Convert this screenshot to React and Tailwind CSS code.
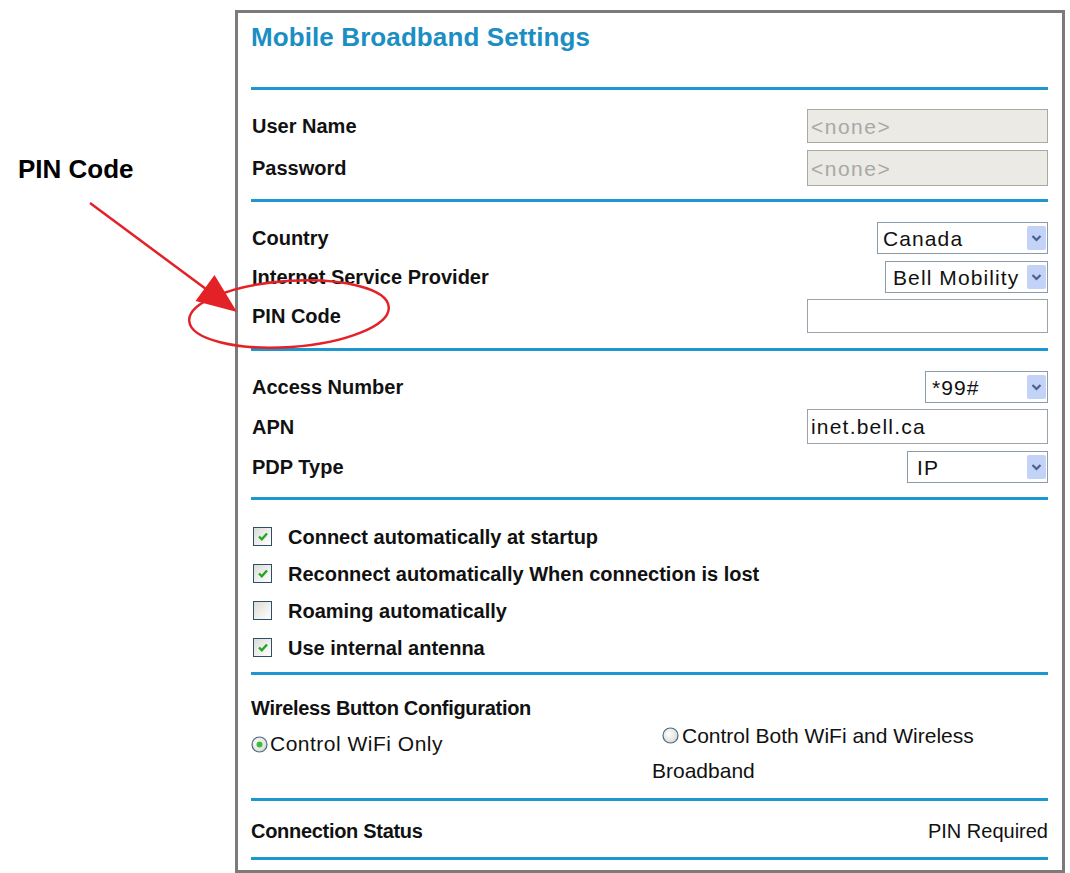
import React from "react"

const Rule = () => <div className="h-[3px] bg-[#1d97cf]" />

function Row({ label, h, children, className = "" }) {
    return (
        <div className={`flex items-center justify-between ${h} ${className}`}>
            <span className="pl-px text-[20px] font-bold leading-[24px] text-[#111]">{label}</span>
            {children}
        </div>
    )
}

function TextBox({ value, disabled, h }) {
    return (
        <div
            className={`flex w-[241px] items-center border px-[3px] text-[21px] leading-none ${h} ${
                disabled
                    ? "border-[#aaa9a0] bg-[#ebeae4] tracking-[1.5px] text-[#a8a8a8]"
                    : "border-[#9aa3ab] bg-white tracking-[1.2px] text-[#111]"
            }`}
        >
            {value}
        </div>
    )
}

function SelectBox({ value, w, pl }) {
    return (
        <div className={`flex h-[32px] items-center justify-between border border-[#8c9bab] bg-white ${w}`}>
            <span className={`text-[21px] leading-none tracking-[1.1px] text-[#111] ${pl}`}>{value}</span>
            <span className="mr-px flex h-[24px] w-[19px] items-center justify-center rounded-[2px] bg-[#c3d3f8]">
                <svg width="11" height="8" viewBox="0 0 11 8">
                    <path d="M1.5 2 L5.5 6 L9.5 2" fill="none" stroke="#4a5f8c" strokeWidth="2.2" />
                </svg>
            </span>
        </div>
    )
}

function CheckRow({ checked, children }) {
    return (
        <div className="flex h-[37px] items-center">
            <span className="ml-[2px] flex h-[19px] w-[19px] items-center justify-center border border-[#2c4f6c] bg-gradient-to-br from-[#dcdcd6] to-white">
                {checked && (
                    <svg width="12" height="11" viewBox="0 0 12 11">
                        <path d="M2 5.5 L4.8 8.3 L10 2.5" fill="none" stroke="#24a624" strokeWidth="2.4" />
                    </svg>
                )}
            </span>
            <span className="ml-[16px] text-[20px] font-bold leading-[24px] text-[#111]">{children}</span>
        </div>
    )
}

function Radio({ checked }) {
    return (
        <svg width="17" height="17" viewBox="0 0 17 17" className="inline-block shrink-0">
            <defs>
                <radialGradient id={checked ? "rbg1" : "rbg2"} cx="0.4" cy="0.4" r="0.7">
                    <stop offset="0" stopColor="#ffffff" />
                    <stop offset="1" stopColor="#d6d6cf" />
                </radialGradient>
            </defs>
            <circle cx="8.5" cy="8.5" r="7.5" fill={`url(#${checked ? "rbg1" : "rbg2"})`} stroke="#4d6a84" strokeWidth="1.2" />
            {checked && <circle cx="8.5" cy="8.5" r="3" fill="#3dbb3d" />}
        </svg>
    )
}

export default function App() {
    return (
        <div className="relative flex h-[873px] w-[1070px] overflow-hidden bg-white font-['Liberation_Sans',Arial,sans-serif]">
            <div className="w-[235px] shrink-0 pl-[18px] pt-[154px]">
                <div className="text-[26px] font-bold leading-[30px] text-black">PIN Code</div>
            </div>

            <div className="mt-[10px] h-[863px] w-[830px] shrink-0 border-[3px] border-[#7b7b7b] pl-[13px] pr-[14px]">
                <div className="h-[74px] pt-[9px]">
                    <h1 className="text-[26px] font-bold leading-[30px] tracking-[0.1px] text-[#1b8ec3]">Mobile Broadband Settings</h1>
                </div>
                <Rule />

                <div className="pb-[13px] pt-[19px]">
                    <Row label="User Name" h="h-[34px]">
                        <TextBox value="<none>" disabled h="h-[34px]" />
                    </Row>
                    <Row label="Password" h="h-[36px]" className="mt-[7px]">
                        <TextBox value="<none>" disabled h="h-[36px]" />
                    </Row>
                </div>
                <Rule />

                <div className="pb-[15px] pt-[20px]">
                    <Row label="Country" h="h-[32px]">
                        <SelectBox value="Canada" w="w-[171px]" pl="pl-[5px]" />
                    </Row>
                    <Row label="Internet Service Provider" h="h-[32px]" className="mt-[7px]">
                        <SelectBox value="Bell Mobility" w="w-[163px]" pl="pl-[7px]" />
                    </Row>
                    <Row label="PIN Code" h="h-[34px]" className="mt-[6px]">
                        <TextBox value="" h="h-[34px]" />
                    </Row>
                </div>
                <Rule />

                <div className="pb-[14px] pt-[20px]">
                    <Row label="Access Number" h="h-[32px]">
                        <SelectBox value="*99#" w="w-[123px]" pl="pl-[6px]" />
                    </Row>
                    <Row label="APN" h="h-[35px]" className="mt-[6px]">
                        <TextBox value="inet.bell.ca" h="h-[35px]" />
                    </Row>
                    <Row label="PDP Type" h="h-[32px]" className="mt-[7px]">
                        <SelectBox value="IP" w="w-[141px]" pl="pl-[9px]" />
                    </Row>
                </div>
                <Rule />

                <div className="pb-[6px] pt-[18px]">
                    <CheckRow checked>Connect automatically at startup</CheckRow>
                    <CheckRow checked>Reconnect automatically When connection is lost</CheckRow>
                    <CheckRow>Roaming automatically</CheckRow>
                    <CheckRow checked>Use internal antenna</CheckRow>
                </div>
                <Rule />

                <div className="pb-[10px] pt-[23px]">
                    <div className="text-[20px] font-bold leading-[20px] tracking-[-0.3px] text-[#111]">
                        Wireless Button Configuration
                    </div>
                    <div className="flex h-[70px] text-[21px] text-[#111]">
                        <div className="flex w-[401px] items-center gap-[2px] self-start pt-[16px] leading-[20px] tracking-[0.5px]">
                            <Radio checked />
                            <span>Control WiFi Only</span>
                        </div>
                        <div className="leading-[35px]">
                            <div className="flex items-center gap-[3px] pl-[10px]">
                                <Radio />
                                <span>Control Both WiFi and Wireless</span>
                            </div>
                            <div>Broadband</div>
                        </div>
                    </div>
                </div>
                <Rule />

                <div className="flex h-[56px] items-start justify-between pt-[20px]">
                    <span className="text-[20px] font-bold leading-[20px] tracking-[-0.3px] text-[#111]">Connection Status</span>
                    <span className="text-[20px] leading-[20px] text-[#111]">PIN Required</span>
                </div>
                <Rule />
            </div>

            <svg className="pointer-events-none absolute left-0 top-0" width="1070" height="873" viewBox="0 0 1070 873">
                <line x1="90" y1="203" x2="210" y2="292" stroke="#e32227" strokeWidth="2.5" />
                <polygon points="237,312 214.5,275 195.5,301" fill="#e32227" />
                <ellipse cx="289" cy="314" rx="100" ry="33" transform="rotate(-4 289 314)" fill="none" stroke="#e32227" strokeWidth="2.5" />
            </svg>
        </div>
    )
}
